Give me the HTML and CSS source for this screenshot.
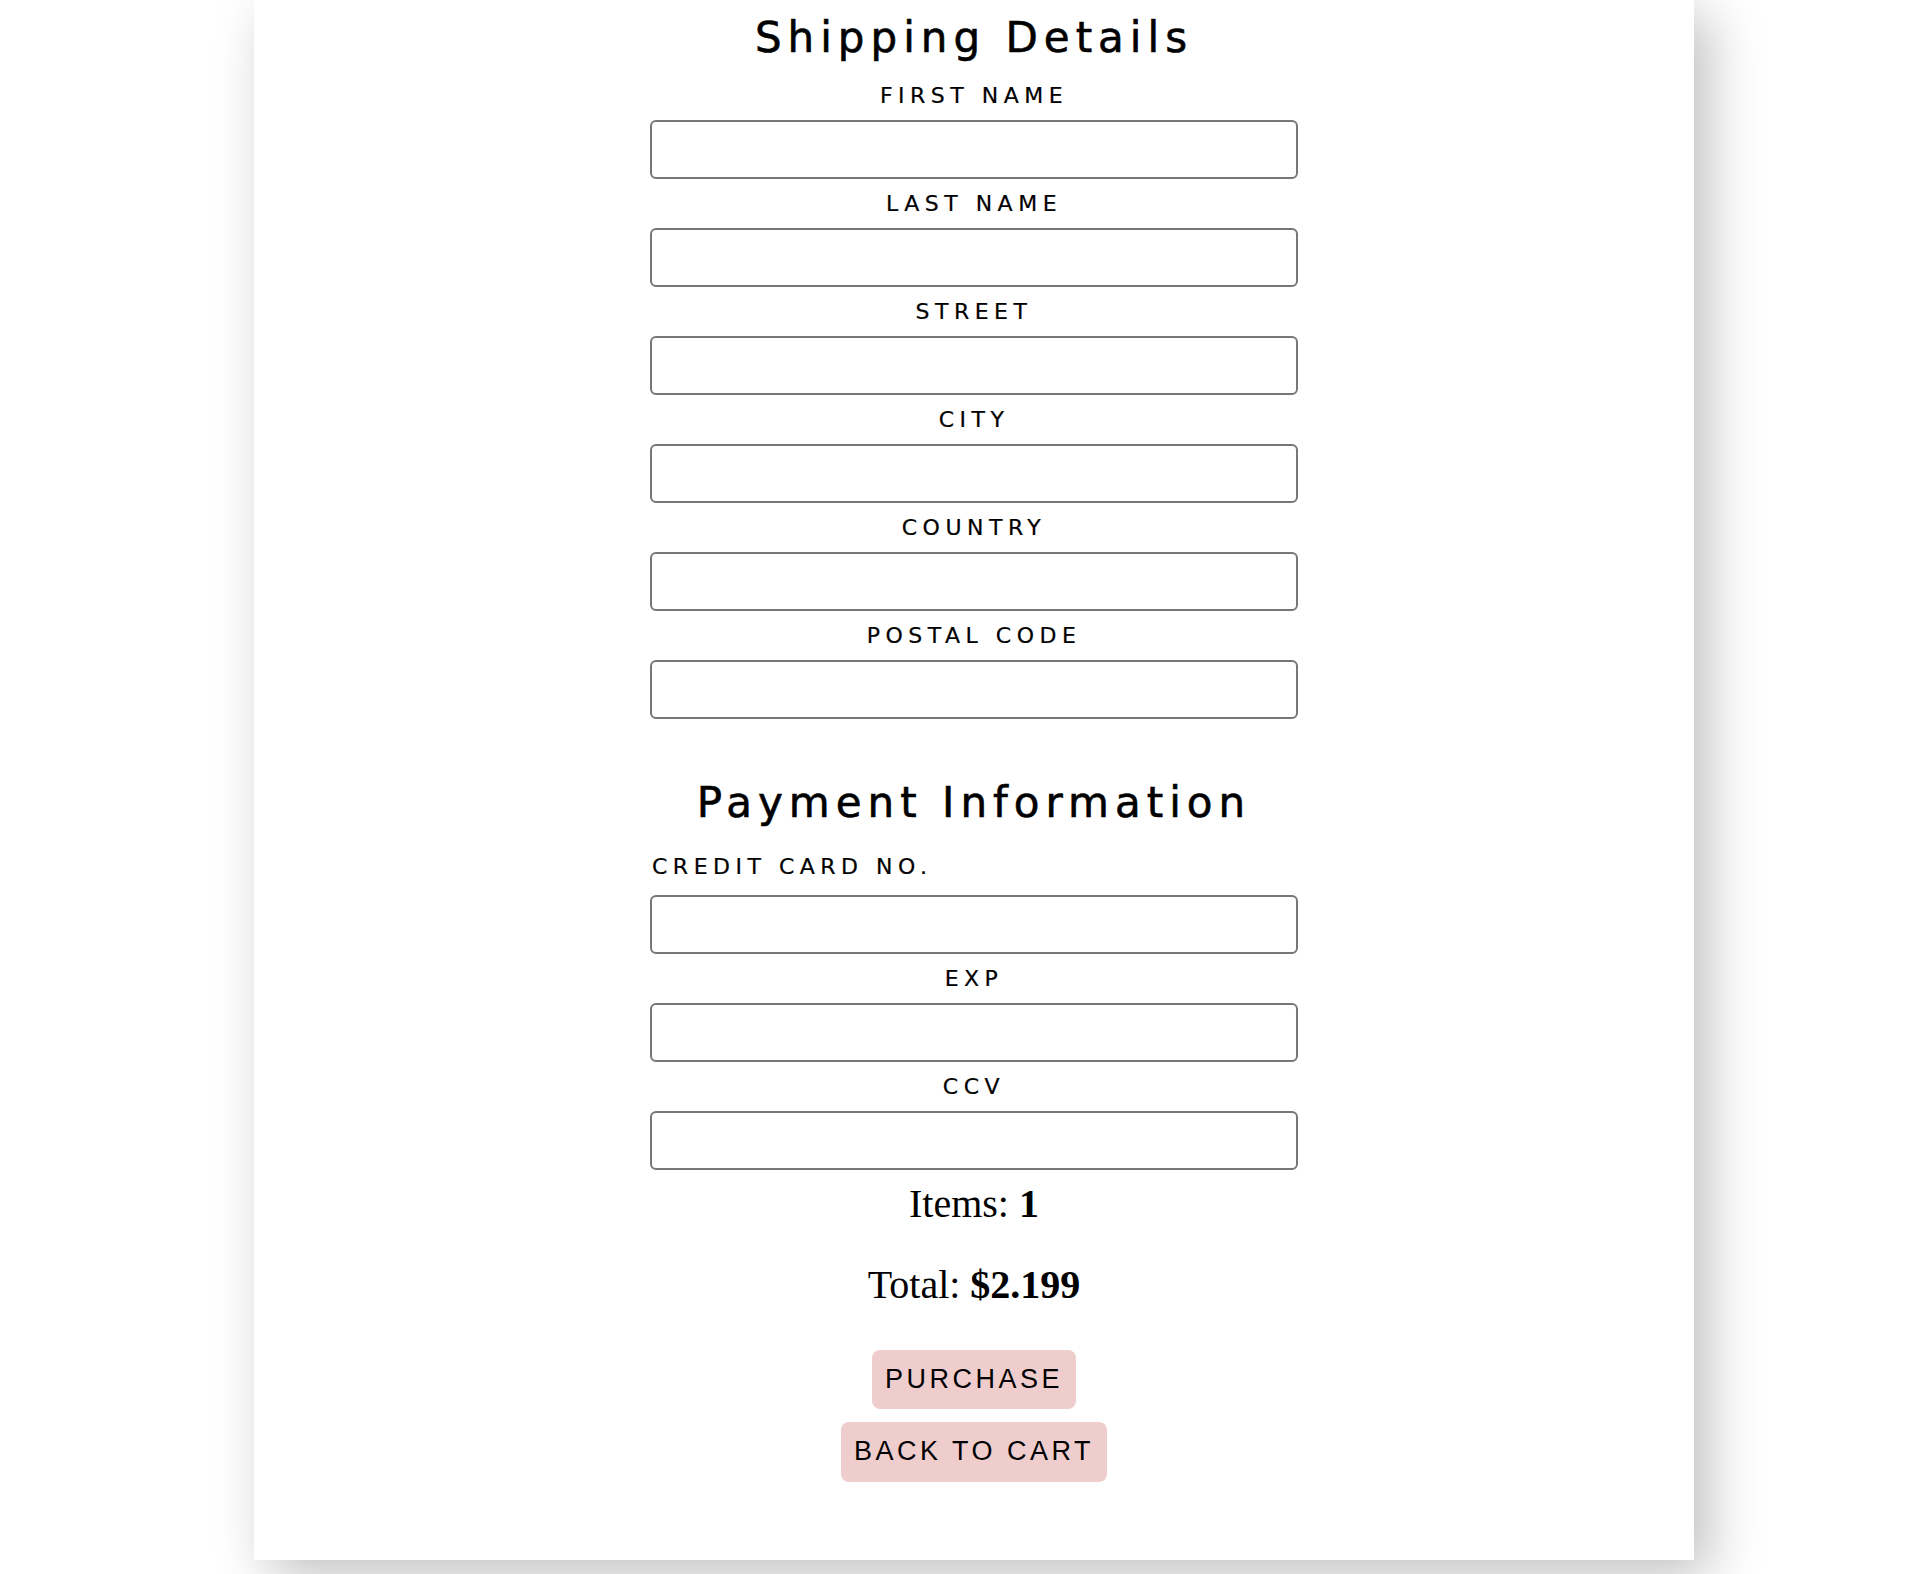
FILE: index.html
```html
<!DOCTYPE html>
<html lang="en">
<head>
<meta charset="utf-8">
<title>Checkout</title>
<link rel="stylesheet" href="styles.css">
</head>
<body>
<main class="card">
  <form class="checkout">
    <h2 class="section-title">Shipping Details</h2>
    <label class="field-label">First Name</label>
    <input class="field-input" type="text">
    <label class="field-label">Last Name</label>
    <input class="field-input" type="text">
    <label class="field-label">Street</label>
    <input class="field-input" type="text">
    <label class="field-label">City</label>
    <input class="field-input" type="text">
    <label class="field-label">Country</label>
    <input class="field-input" type="text">
    <label class="field-label">Postal Code</label>
    <input class="field-input" type="text">

    <h2 class="section-title payment-title">Payment Information</h2>
    <label class="field-label field-label-left">Credit Card No.</label>
    <input class="field-input" type="text">
    <label class="field-label">Exp</label>
    <input class="field-input" type="text">
    <label class="field-label">CCV</label>
    <input class="field-input" type="text">

    <p class="summary summary-items">Items: <b>1</b></p>
    <p class="summary summary-total">Total: <b>$2.199</b></p>

    <button class="btn btn-purchase" type="button">Purchase</button>
    <button class="btn btn-back" type="button">Back to Cart</button>
  </form>
</main>
</body>
</html>
```

FILE: styles.css
```css
html, body {
  margin: 0;
  padding: 0;
  background: #ffffff;
}

body {
  height: 1574px;
  overflow: hidden;
}

.card {
  width: 1440px;
  margin-left: 254px;
  background: #ffffff;
  padding: 13px 0 78px;
  box-shadow: 15px 15px 50px rgba(0, 0, 0, 0.25);
}

.checkout {
  width: 648px;
  margin: 0 auto;
  display: flex;
  flex-direction: column;
  align-items: center;
}

.section-title {
  margin: 0 0 8px;
  font-family: "DejaVu Sans", sans-serif;
  font-weight: normal;
  font-size: 42px;
  line-height: 50px;
  letter-spacing: 6px;
  -webkit-text-stroke: 0.6px #000;
  color: #000;
  text-align: center;
}

.payment-title {
  margin-top: 59px;
  margin-bottom: 18px;
}

.field-label {
  display: block;
  height: 49px;
  line-height: 49px;
  font-family: "DejaVu Sans", sans-serif;
  font-size: 22px;
  letter-spacing: 5.5px;
  -webkit-text-stroke: 0.2px #000;
  text-transform: uppercase;
  color: #000;
  text-align: center;
}

.field-label-left {
  align-self: stretch;
  text-align: left;
  padding-left: 2px;
  line-height: 41px;
}

.field-input {
  box-sizing: border-box;
  width: 648px;
  height: 59px;
  margin: 0;
  border: 2px solid #777777;
  border-radius: 6px;
  background: #fff;
  font-size: 20px;
  padding: 0 10px;
}

.summary {
  margin: 0;
  font-family: "Liberation Serif", "Times New Roman", serif;
  font-size: 40px;
  line-height: 46px;
  color: #000;
}

.summary-items {
  margin-top: 11px;
}

.summary-total {
  margin-top: 35px;
}

.btn {
  font-family: "Liberation Sans", Arial, sans-serif;
  font-size: 27px;
  line-height: 31px;
  letter-spacing: 3.5px;
  text-transform: uppercase;
  color: #000;
  background: #f0cdcd;
  border: none;
  border-radius: 8px;
  padding: 14px 13px;
  cursor: pointer;
}

.btn-purchase {
  margin-top: 42px;
}

.btn-back {
  margin-top: 13px;
  padding-bottom: 15px;
}
```
